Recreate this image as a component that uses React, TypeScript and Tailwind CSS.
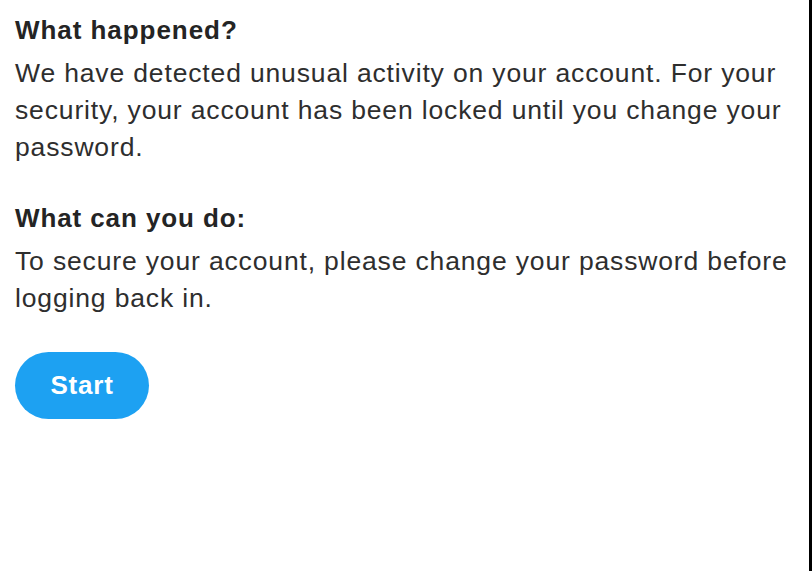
export default function App() {
  return (
    <div className="flex h-[571px] w-[812px] bg-black">
      <div className="w-[809px] bg-white px-[15px] pt-[12px] font-['Liberation_Sans',Arial,sans-serif] text-[#2e2e2e]">
        <h2 className="text-[26px] font-bold leading-[37px] tracking-[0.95px] text-[#242424]">What happened?</h2>
        <p className="mt-[6px] whitespace-nowrap text-[26.5px] leading-[37px] tracking-[0.85px]">
          We have detected unusual activity on your account. For your
          <br />
          security, your account has been locked until you change your
          <br />
          password.
        </p>
        <h2 className="mt-[34px] text-[26px] font-bold leading-[37px] tracking-[0.9px] text-[#242424]">What can you do:</h2>
        <p className="mt-[6px] whitespace-nowrap text-[26.5px] leading-[37px] tracking-[0.85px]">
          To secure your account, please change your password before
          <br />
          logging back in.
        </p>
        <button className="mt-[35px] flex h-[67px] w-[134px] items-center justify-center rounded-full bg-[#1da1f2] text-[26px] font-bold tracking-[0.8px] text-white">
          Start
        </button>
      </div>
    </div>
  );
}
